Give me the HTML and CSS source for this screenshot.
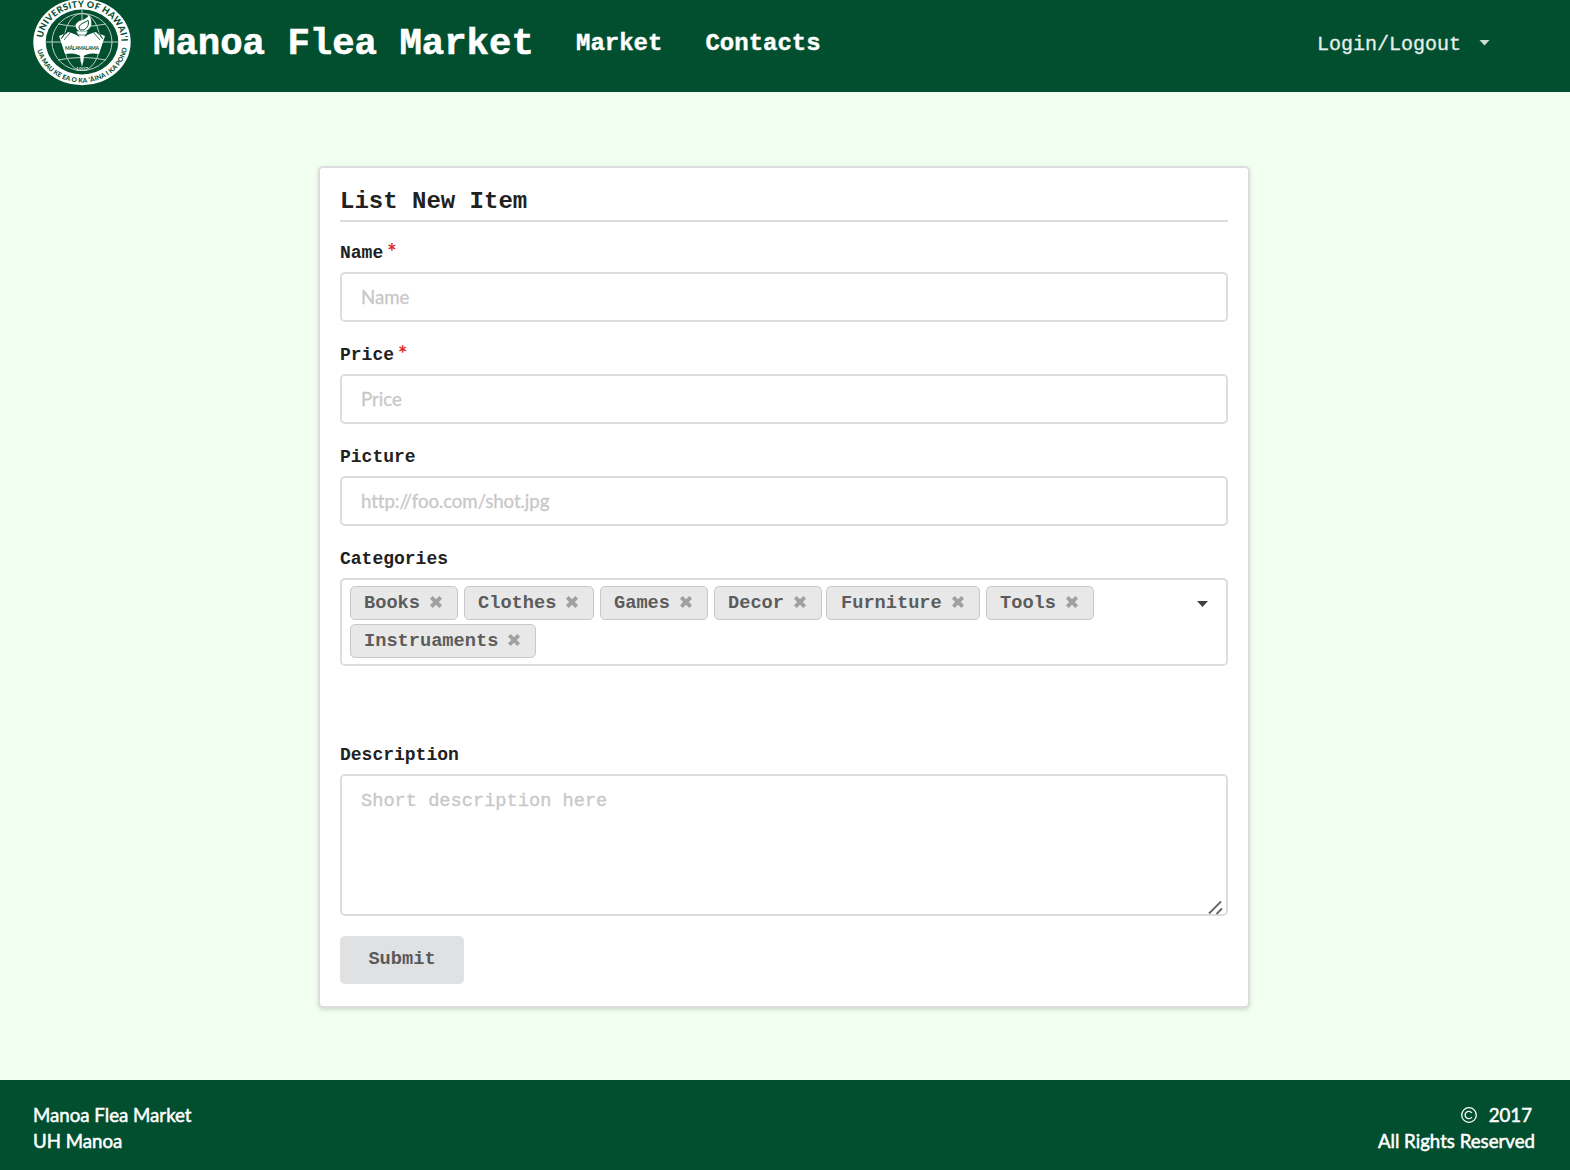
FILE: index.html
```
<!DOCTYPE html>
<html lang="en">
<head>
<meta charset="utf-8">
<title>Manoa Flea Market</title>
<link rel="stylesheet" href="styles.css">
</head>
<body>
<header class="nav">
  <svg class="seal" viewBox="33 -2 98 88" aria-hidden="true">
    <defs>
      <path id="arc-top" d="M42.600 42A39.400 34.900 0 0 1 121.400 42"/>
      <path id="arc-bottom" d="M36.500 42A45.500 40.600 0 0 0 127.500 42"/>
    </defs>
    <ellipse cx="82" cy="42" rx="48.7" ry="43.3" fill="#fff"/>
    <ellipse cx="82" cy="42" rx="36.3" ry="32.6" fill="#024f30"/>
    <g fill="none" stroke="#b9d0c5" stroke-width="1">
      <ellipse cx="82" cy="42" rx="30" ry="28.5"/>
      <ellipse cx="82" cy="42" rx="18" ry="28.5"/>
      <path d="M46 42H118M82 10V66M58 24Q82 29 106 24M58 60Q82 55 106 60"/>
    </g>
    <path d="M59 36 64 34 61 39 68 32Q77 34 82 39Q87 34 96 32L103 39 100 34 105 36 99 54Q88 52 82 57Q76 52 65 54Z" fill="#fff"/>
    <path d="M79 34H85L83.5 61 82 65 80.500 61Z" fill="#fff"/>
    <path d="M76 31H88L86 35H78Z" fill="#fff" stroke="#024f30" stroke-width=".6"/>
    <path d="M79 31Q72 26 79 21Q87 19 89 15Q95 26 86 31Z" fill="#fff"/>
    <path d="M80 30Q77 26 83 23Q88 21 88 20Q90 26 84 30Z" fill="none" stroke="#024f30" stroke-width="1"/>
    <path d="M61 39 66 32M64 40 70 33M103 39 98 32M100 40 94 33" stroke="#024f30" stroke-width=".8"/>
    <text class="seal-small" x="65" y="49.500" textLength="34">MĀLAMALAMA</text>
    <text class="seal-year" x="76" y="70.500" textLength="12">1907</text>
    <text class="seal-top"><textPath href="#arc-top" startOffset="4" textLength="112">UNIVERSITY OF HAWAI‘I</textPath></text>
    <text class="seal-bottom"><textPath href="#arc-bottom" startOffset="8" textLength="121">UA MAU KE EA O KA ʻĀINA I KA PONO</textPath></text>
  </svg>
  <a class="brand">Manoa Flea Market</a>
  <a class="link">Market</a>
  <a class="link">Contacts</a>
  <a class="login">Login/Logout <i class="caret"></i></a>
</header>
<main class="main">
  <form class="card">
    <h1 class="title">List New Item</h1>
    <label class="label">Name<span class="req">*</span></label>
    <input class="input" placeholder="Name">
    <label class="label">Price<span class="req">*</span></label>
    <input class="input" placeholder="Price">
    <label class="label">Picture</label>
    <input class="input url" placeholder="http://foo.com/shot.jpg">
    <label class="label">Categories</label>
    <div class="select">
      <div class="tags">
        <span class="tag w108">Books<svg class="x" viewBox="0 0 12 12"><path d="M2 2 10 10M10 2 2 10"/></svg></span>
        <span class="tag w130">Clothes<svg class="x" viewBox="0 0 12 12"><path d="M2 2 10 10M10 2 2 10"/></svg></span>
        <span class="tag w108">Games<svg class="x" viewBox="0 0 12 12"><path d="M2 2 10 10M10 2 2 10"/></svg></span>
        <span class="tag w108 tight">Decor<svg class="x" viewBox="0 0 12 12"><path d="M2 2 10 10M10 2 2 10"/></svg></span>
        <span class="tag w154">Furniture<svg class="x" viewBox="0 0 12 12"><path d="M2 2 10 10M10 2 2 10"/></svg></span>
        <span class="tag w108">Tools<svg class="x" viewBox="0 0 12 12"><path d="M2 2 10 10M10 2 2 10"/></svg></span>
        <span class="tag w186">Instruaments<svg class="x" viewBox="0 0 12 12"><path d="M2 2 10 10M10 2 2 10"/></svg></span>
      </div>
      <i class="caret dark"></i>
    </div>
    <label class="label">Description</label>
    <div class="area">
      <textarea class="textarea" placeholder="Short description here"></textarea>
      <svg class="grip" viewBox="0 0 16 16"><path d="M2 14.500 14 2.500M9.500 15 15 9.500"/></svg>
    </div>
    <button class="submit" type="button">Submit</button>
  </form>
</main>
<footer class="footer">
  <div>Manoa Flea Market<br>UH Manoa</div>
  <div class="right">
    <div class="year"><svg class="copy" viewBox="0 0 16 16"><circle cx="8" cy="8" r="7.300"/><path d="M10.900 10A3.700 3.700 0 1 1 10.900 6"/></svg>2017</div>
    <div>All Rights Reserved</div>
  </div>
</footer>
</body>
</html>
```
FILE: styles.css
```
* { box-sizing: border-box; }
body {
  margin: 0;
  height: 1170px;
  display: flex;
  flex-direction: column;
  overflow: hidden;
  background: #f0fff0;
  color: #212121;
  font-family: "Liberation Mono", "Courier New", monospace;
}
.nav {
  height: 92px;
  flex: none;
  display: flex;
  align-items: flex-start;
  padding-left: 33px;
  overflow: hidden;
  background: #024f30;
  color: #fff;
  font-weight: bold;
}
.seal { width: 98px; height: 88px; margin-top: -2px; flex: none; }
.seal text { font-family: Lato, sans-serif; font-weight: bold; fill: #024f30; }
.seal .seal-top { font-size: 9px; font-weight: 900; }
.seal .seal-bottom { font-size: 6.5px; font-weight: 900; }
.seal .seal-small { font-size: 5px; }
.seal .seal-year { font-size: 5px; fill: #d5e3dc; }
.brand {
  margin: 23px 0 0 22px;
  width: 380px;
  font-size: 37.33px;
  line-height: 42px;
  white-space: nowrap;
  -webkit-text-stroke: .6px #fff;
}
.link { margin: 30px 0 0 43px; font-size: 24px; line-height: 27px; -webkit-text-stroke: .4px #fff; }
.login {
  display: flex;
  align-items: center;
  margin: 33px 80px 0 auto;
  font-size: 20px;
  font-weight: normal;
  line-height: 23px;
  color: #e6eeea;
  -webkit-text-stroke: .3px #e6eeea;
}
.caret {
  width: 11px;
  height: 6px;
  margin: -4px 0 0 18px;
  background: #ccdcd5;
  clip-path: polygon(0 0, 100% 0, 50% 100%);
}
.main { flex: 1; padding: 74px 320px 0 318px; }
.card {
  display: flex;
  flex-direction: column;
  height: 842px;
  padding: 18px 20px 22px;
  background: #fff;
  border: 2px solid #ddd;
  border-radius: 5px;
  box-shadow: 0 2px 4px rgba(34, 36, 38, .15);
}
.title {
  height: 36px;
  margin: 0 0 20px;
  border-bottom: 2px solid #ddd;
  font-size: 24px;
  line-height: 31px;
}
.label {
  display: flex;
  height: 22px;
  margin-bottom: 8px;
  font-size: 18px;
  font-weight: bold;
  line-height: 22px;
}
.req { margin: -1px 0 0 4px; color: #db2828; font: bold 22px/22px Lato, sans-serif; }
.input, .textarea, .select {
  width: 100%;
  background: #fff;
  border: 2px solid #ddd;
  border-radius: 5px;
}
.input {
  height: 50px;
  flex: none;
  margin-bottom: 22px;
  padding: 0 19px;
  font: 18.67px Lato, sans-serif;
}
.url { letter-spacing: -.08px; }
::placeholder { color: #c8c8c8; opacity: 1; -webkit-text-stroke: .3px #c8c8c8; }
.select {
  display: flex;
  justify-content: space-between;
  align-items: flex-start;
  height: 88px;
  flex: none;
  margin-bottom: 78px;
  padding: 6px 0 0 8px;
}
.caret.dark { flex: none; margin: 15px 18px 0 0; background: #404040; }
.tags { display: flex; flex-wrap: wrap; gap: 4px 6px; width: 780px; }
.tag {
  display: flex;
  align-items: center;
  height: 34px;
  padding-left: 13px;
  background: #e8e8e8;
  border: 1.500px solid #c8c8c8;
  border-radius: 5px;
  color: #5c5c5c;
  font-size: 18.67px;
  font-weight: bold;
}
.tight { margin-right: -2px; }
.w108 { width: 108px; }
.w130 { width: 130px; }
.w154 { width: 154px; padding-left: 14px; }
.w186 { width: 186px; }
.x { width: 14px; height: 14px; margin: -2px 0 0 9px; }
.x path { stroke: #a0a0a0; stroke-width: 3.300; }
.area { position: relative; height: 142px; flex: none; margin-bottom: 20px; }
.textarea {
  display: block;
  height: 142px;
  padding: 13px 19px;
  resize: none;
  font: 18.67px/24px "Liberation Mono", "Courier New", monospace;
}
.grip { position: absolute; right: 5px; bottom: 1px; width: 16px; height: 16px; }
.grip path { stroke: #666; stroke-width: 1.800; fill: none; }
.submit {
  width: 124px;
  height: 48px;
  flex: none;
  padding: 0 0 3px;
  border: 0;
  border-radius: 5px;
  background: #e0e1e2;
  color: #5a5a5a;
  font: bold 18.67px "Liberation Mono", "Courier New", monospace;
}
.footer {
  height: 90px;
  flex: none;
  display: flex;
  justify-content: space-between;
  padding: 22px 35px 0 33px;
  background: #024f30;
  color: #fff;
  font: 18.67px/26px Lato, sans-serif;
  -webkit-text-stroke: .5px #fff;
}
.right { text-align: right; }
.year { display: flex; justify-content: flex-end; align-items: center; padding-right: 3px; }
.copy { width: 16px; height: 16px; margin-right: 12px; fill: none; stroke: #fff; stroke-width: 1.300; }
```
